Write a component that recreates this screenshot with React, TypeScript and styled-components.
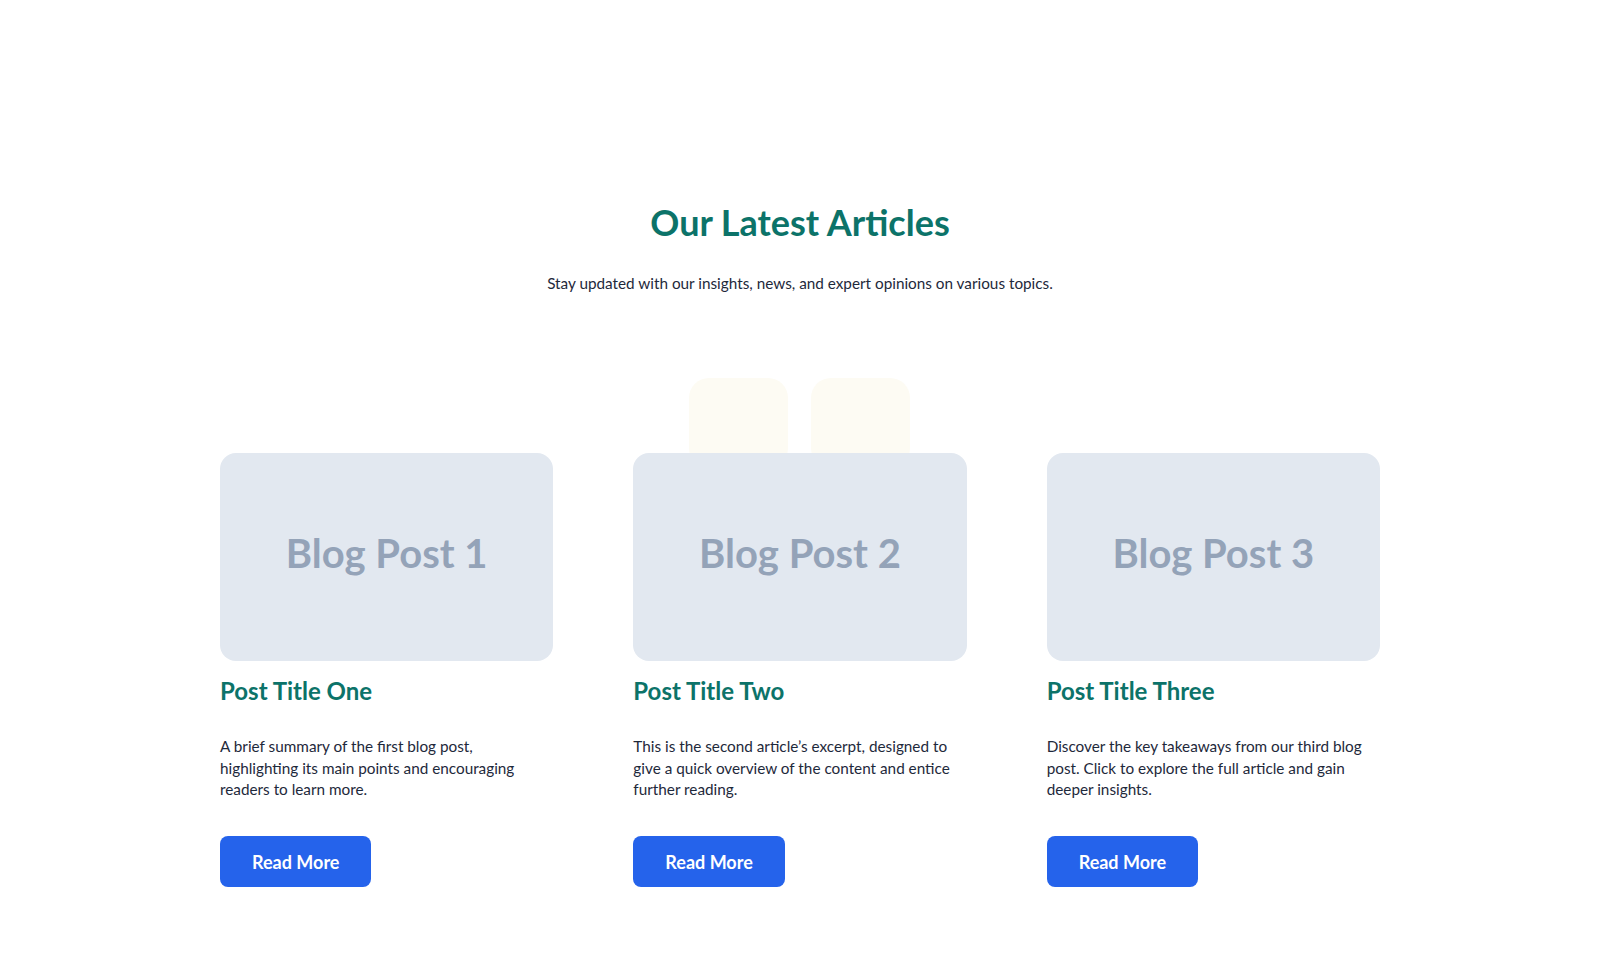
import React from "react";
import styled, { createGlobalStyle } from "styled-components";

const Global = createGlobalStyle`
  * { box-sizing: border-box; }
  html, body { margin: 0; padding: 0; background: #ffffff; }
  body { font-family: "Lato", "Noto Sans", sans-serif; color: #1e293b; }
`;

const Section = styled.section`
  padding: 201px 20px 80px;
  display: flex;
  flex-direction: column;
  align-items: center;
`;

const Container = styled.div`
  width: 100%;
  max-width: 1160px;
  display: flex;
  flex-direction: column;
  align-items: center;
`;

const Heading = styled.h2`
  margin: 0;
  font-family: "Lato", sans-serif;
  font-weight: 700;
  font-size: 36px;
  line-height: 1.2;
  color: #0c7369;
  text-align: center;
`;

const Subtitle = styled.p`
  margin: 28px 0 0;
  font-family: "Lato", sans-serif;
  font-size: 15.3px;
  line-height: 1.5;
  color: #1e293b;
  text-align: center;
`;

const GridWrap = styled.div`
  position: relative;
  width: 100%;
  margin-top: 158px;
`;

const Decor = styled.div<{ $left: number }>`
  position: absolute;
  top: -75px;
  left: ${(p) => p.$left}px;
  width: 99px;
  height: 90px;
  border-radius: 20px;
  background: #fdfbf3;
`;

const Grid = styled.div`
  position: relative;
  display: grid;
  grid-template-columns: repeat(3, 1fr);
  gap: 80px;
`;

const Card = styled.article`
  display: flex;
  flex-direction: column;
  align-items: flex-start;
`;

const Thumb = styled.div`
  width: 100%;
  height: 208px;
  padding-bottom: 8px;
  border-radius: 16px;
  background: #e2e8f0;
  display: flex;
  align-items: center;
  justify-content: center;
  font-family: "Lato", sans-serif;
  font-weight: 700;
  font-size: 40px;
  color: #94a3b8;
`;

const Title = styled.h3`
  margin: 14px 0 0;
  font-family: "Lato", sans-serif;
  font-weight: 700;
  font-size: 24px;
  line-height: 1.3;
  color: #0c7369;
`;

const Excerpt = styled.p`
  margin: 30px 0 0;
  font-family: "Lato", sans-serif;
  font-size: 15.3px;
  line-height: 1.41;
  color: #1e293b;
`;

const Button = styled.button`
  margin-top: 35px;
  height: 51px;
  padding: 0 32px;
  border: none;
  border-radius: 8px;
  background: #2563eb;
  color: #ffffff;
  font-family: "Lato", sans-serif;
  font-weight: 700;
  font-size: 18px;
  cursor: pointer;
`;

const posts = [
  {
    thumb: "Blog Post 1",
    title: "Post Title One",
    text: "A brief summary of the first blog post, highlighting its main points and encouraging readers to learn more.",
  },
  {
    thumb: "Blog Post 2",
    title: "Post Title Two",
    text: "This is the second article\u2019s excerpt, designed to give a quick overview of the content and entice further reading.",
  },
  {
    thumb: "Blog Post 3",
    title: "Post Title Three",
    text: "Discover the key takeaways from our third blog post. Click to explore the full article and gain deeper insights.",
  },
];

export default function App() {
  return (
    <>
      <Global />
      <Section>
        <Container>
          <Heading>Our Latest Articles</Heading>
          <Subtitle>
            Stay updated with our insights, news, and expert opinions on various topics.
          </Subtitle>
          <GridWrap>
            <Decor $left={469} />
            <Decor $left={591} />
            <Grid>
              {posts.map((p) => (
                <Card key={p.title}>
                  <Thumb>{p.thumb}</Thumb>
                  <Title>{p.title}</Title>
                  <Excerpt>{p.text}</Excerpt>
                  <Button>Read More</Button>
                </Card>
              ))}
            </Grid>
          </GridWrap>
        </Container>
      </Section>
    </>
  );
}
